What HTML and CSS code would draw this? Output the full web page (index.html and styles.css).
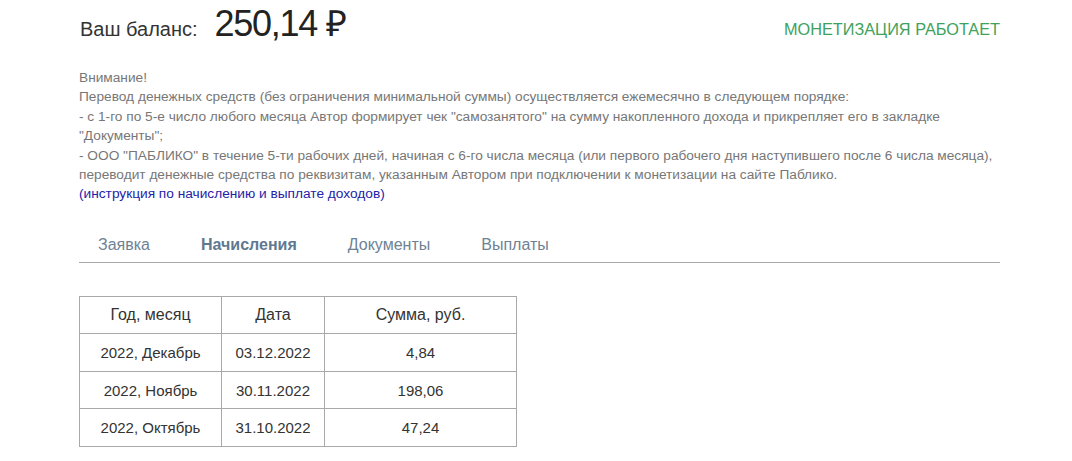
FILE: index.html
```html
<!DOCTYPE html>
<html lang="ru">

<head>
    <meta charset="UTF-8">
    <meta name="viewport" content="width=device-width, initial-scale=1.0">
    <title>Монетизация</title>
    <link rel="stylesheet" href="styles.css">
</head>

<body>
    <div class="page">

        <div class="balance-row">
            <div class="balance">
                <span class="balance-label">Ваш баланс:</span>
                <span class="balance-value">250,14 ₽</span>
            </div>
            <div class="status">МОНЕТИЗАЦИЯ РАБОТАЕТ</div>
        </div>

        <!-- порядок выплат -->
        <div class="notice">
            Внимание!<br>
            Перевод денежных средств (без ограничения минимальной суммы) осуществляется ежемесячно в следующем порядке:<br>
            - с 1-го по 5-е число любого месяца Автор формирует чек "самозанятого" на сумму накопленного дохода и прикрепляет его в закладке "Документы";<br>
            - ООО "ПАБЛИКО" в течение 5-ти рабочих дней, начиная с 6-го числа месяца (или первого рабочего дня наступившего после 6 числа месяца), переводит денежные средства по реквизитам, указанным Автором при подключении к монетизации на сайте Паблико.<br>
            <a href="#" class="notice-link">(инструкция по начислению и выплате доходов)</a>
        </div>

        <ul class="tabs">
            <li><a href="#">Заявка</a></li>
            <li class="active"><a href="#">Начисления</a></li>
            <li><a href="#">Документы</a></li>
            <li><a href="#">Выплаты</a></li>
        </ul>

        <table class="accruals">
            <tr>
                <th class="col-month">Год, месяц</th>
                <th class="col-date">Дата</th>
                <th class="col-sum">Сумма, руб.</th>
            </tr>
            <tr>
                <td>2022, Декабрь</td>
                <td>03.12.2022</td>
                <td>4,84</td>
            </tr>
            <tr>
                <td>2022, Ноябрь</td>
                <td>30.11.2022</td>
                <td>198,06</td>
            </tr>
            <tr>
                <td>2022, Октябрь</td>
                <td>31.10.2022</td>
                <td>47,24</td>
            </tr>
        </table>

    </div>
</body>

</html>
```

FILE: styles.css
```css
body {
    margin: 0;
    font-family: 'Liberation Sans', Arial, sans-serif;
    background-color: #fff;
    color: #333;
}

.page {
    width: 921px;
    margin-left: 79px;
}

.balance-row {
    display: flex;
    justify-content: space-between;
    align-items: center;
    height: 50px;
    margin-top: -3px;
}

.balance {
    display: flex;
    align-items: baseline;
}

.balance-label {
    font-size: 20px;
    color: #333;
    margin-left: 1px;
}

.balance-value {
    font-size: 36px;
    letter-spacing: -1.3px;
    color: #222;
    margin-left: 17px;
}

.status {
    font-size: 16.3px;
    color: #3ea25c;
    margin-top: 14px;
}

.notice {
    margin-top: 21px;
    font-size: 13.7px;
    line-height: 19.4px;
    color: #777;
}

.notice-link {
    color: #2323a8;
    text-decoration: none;
}

.tabs {
    list-style: none;
    display: flex;
    gap: 51px;
    margin: 0;
    margin-top: 17px;
    padding: 7px 0 0 19px;
    border-bottom: 1px solid #a8a8a8;
    height: 34px;
    align-items: center;
}

.tabs a {
    font-size: 16px;
    color: #6f8294;
    text-decoration: none;
}

.tabs .active a {
    font-weight: bold;
    color: #5f7891;
}

.accruals {
    border-collapse: collapse;
    margin-top: 33px;
    font-size: 15px;
    color: #333;
}

.accruals th,
.accruals td {
    border: 1px solid #a9a9a9;
    height: 36.5px;
    padding: 0;
    text-align: center;
    font-weight: normal;
}

.accruals th {
    font-size: 16px;
}

.col-month {
    width: 141px;
}

.col-date {
    width: 102px;
}

.col-sum {
    width: 191px;
}
```
